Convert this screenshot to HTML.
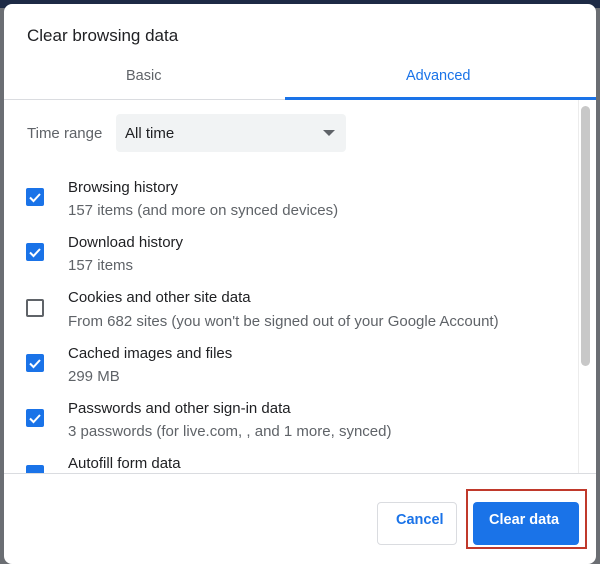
<!DOCTYPE html>
<html><head><style>
body{margin:0;width:600px;height:556px;background:#6b6e73;position:relative;overflow:hidden;font-family:"Liberation Sans",sans-serif;}
.top{position:absolute;left:0;top:0;width:600px;height:8px;background:#1d2a45;}
.dlg{position:absolute;left:4px;top:4px;width:592px;height:560px;background:#fff;border-radius:8px;}
.t{position:absolute;white-space:nowrap;}
.cb{position:absolute;left:26px;width:18px;height:18px;border-radius:2px;background:#1a73e8;}
.cb svg{position:absolute;left:0;top:0}
.cb.off{background:#fff;border:2px solid #5f6368;width:14px;height:14px;}
.h{font-size:15px;color:#202124;left:68px}
.s{font-size:15px;color:#5f6368;left:68px}
</style></head><body>
<div class="top"></div>
<div class="dlg"></div>
<div class="t" style="left:27px;top:26px;font-size:17px;color:#202124">Clear browsing data</div>
<div class="t" style="left:126px;top:68px;font-size:14.5px;color:#5f6368">Basic</div>
<div class="t" style="left:406px;top:68px;font-size:14.5px;color:#1a73e8">Advanced</div>
<div style="position:absolute;left:4px;top:99px;width:592px;height:1px;background:#dadce0"></div>
<div style="position:absolute;left:285px;top:97px;width:311px;height:3px;background:#1a73e8"></div>
<div style="position:absolute;left:581px;top:106px;width:9px;height:260px;background:#c8c8c8;border-radius:5px"></div>
<div style="position:absolute;left:578px;top:100px;width:1px;height:373px;background:#ececec"></div>
<div class="t" style="left:27px;top:125px;font-size:15px;color:#5f6368">Time range</div>
<div style="position:absolute;left:116px;top:114px;width:230px;height:38px;background:#f1f3f4;border-radius:4px"></div>
<div class="t" style="left:125px;top:125px;font-size:15px;color:#202124">All time</div>
<div style="position:absolute;left:323px;top:130px;width:0;height:0;border-left:6px solid transparent;border-right:6px solid transparent;border-top:6px solid #5f6368"></div>

<div class="cb" style="top:188px"><svg width="18" height="18"><path d="M4 9.5l3.5 3.5L14 6" stroke="#fff" stroke-width="2" fill="none"/></svg></div>
<div class="t h" style="top:179px">Browsing history</div>
<div class="t s" style="top:202px">157 items (and more on synced devices)</div>
<div class="cb" style="top:243px"><svg width="18" height="18"><path d="M4 9.5l3.5 3.5L14 6" stroke="#fff" stroke-width="2" fill="none"/></svg></div>
<div class="t h" style="top:234px">Download history</div>
<div class="t s" style="top:257px">157 items</div>
<div class="cb off" style="top:299px"></div>
<div class="t h" style="top:289px">Cookies and other site data</div>
<div class="t s" style="top:313px">From 682 sites (you won't be signed out of your Google Account)</div>
<div class="cb" style="top:354px"><svg width="18" height="18"><path d="M4 9.5l3.5 3.5L14 6" stroke="#fff" stroke-width="2" fill="none"/></svg></div>
<div class="t h" style="top:345px">Cached images and files</div>
<div class="t s" style="top:368px">299 MB</div>
<div class="cb" style="top:409px"><svg width="18" height="18"><path d="M4 9.5l3.5 3.5L14 6" stroke="#fff" stroke-width="2" fill="none"/></svg></div>
<div class="t h" style="top:400px">Passwords and other sign-in data</div>
<div class="t s" style="top:423px">3 passwords (for live.com, , and 1 more, synced)</div>
<div style="position:absolute;left:4px;top:465px;width:574px;height:8px;overflow:hidden"><div class="cb" style="top:0;left:22px"></div></div>
<div class="t h" style="top:455px">Autofill form data</div>
<div style="position:absolute;left:4px;top:473px;width:592px;height:1px;background:#dadce0"></div>

<div style="position:absolute;left:377px;top:502px;width:78px;height:41px;border:1px solid #dadce0;border-radius:4px;background:#fff"></div>
<div class="t" style="left:396px;top:512px;font-size:14.5px;font-weight:bold;color:#1a73e8">Cancel</div>
<div style="position:absolute;left:466px;top:489px;width:117px;height:56px;border:2px solid #c0392b"></div>
<div style="position:absolute;left:473px;top:502px;width:106px;height:43px;background:#1a73e8;border-radius:4px"></div>
<div class="t" style="left:489px;top:512px;font-size:14.5px;font-weight:bold;color:#fff">Clear data</div>
</body></html>
